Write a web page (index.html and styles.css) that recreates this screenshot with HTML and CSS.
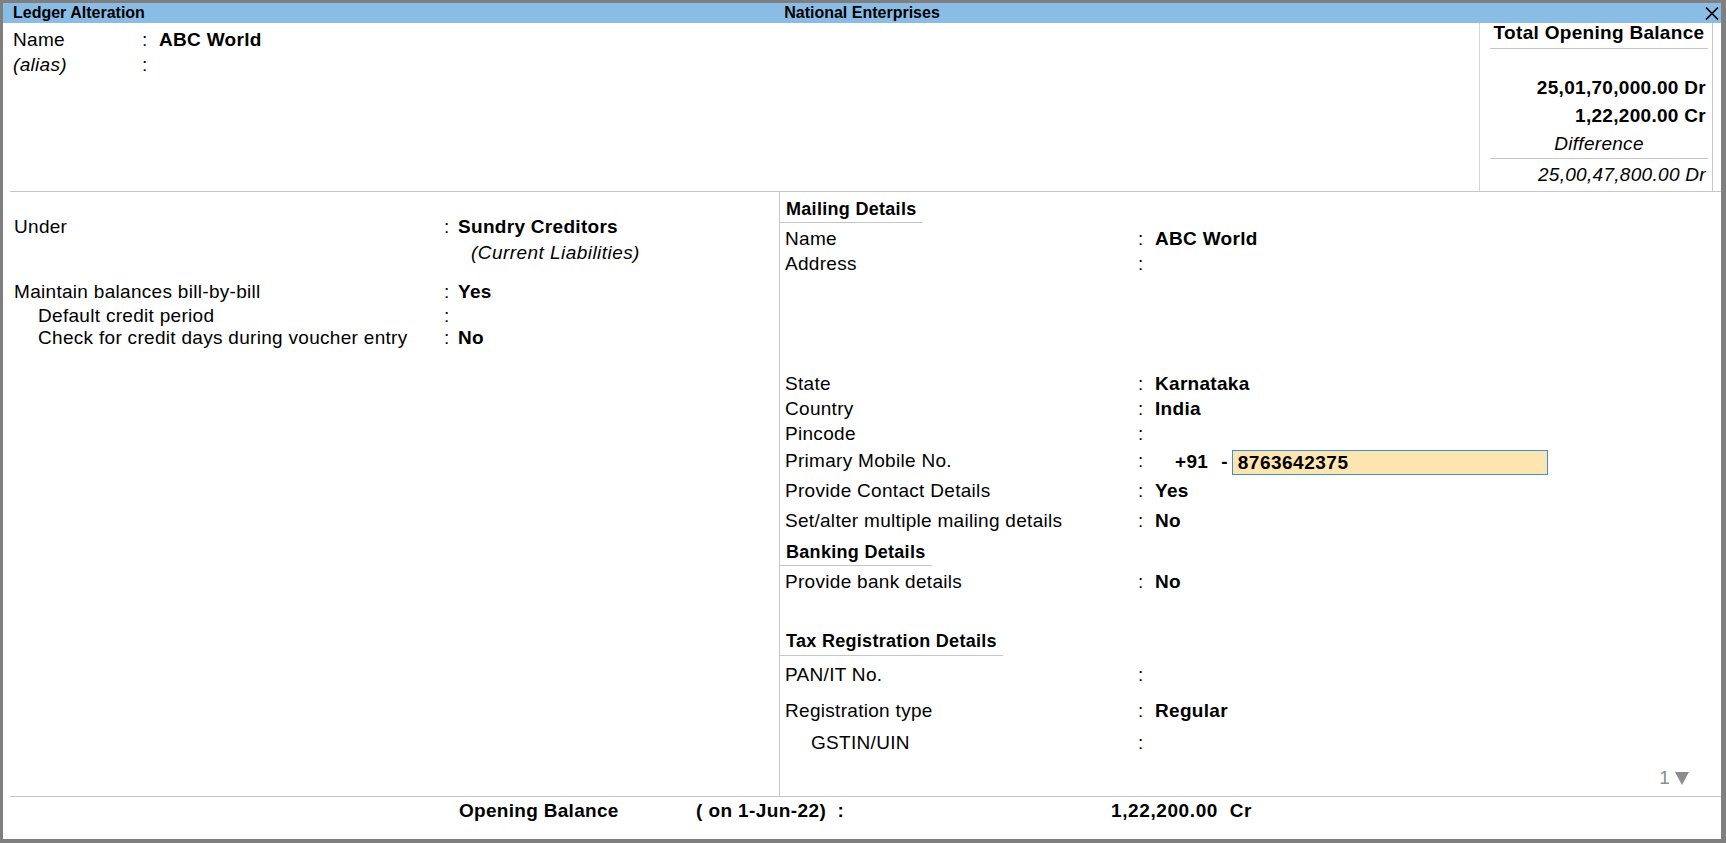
FILE: index.html
```html
<!DOCTYPE html>
<html>
<head>
<meta charset="utf-8">
<title>Ledger Alteration</title>
<link rel="stylesheet" href="styles.css">
</head>
<body>
<div class="window">
  <div class="titlebar">
    <div class="tb-left">Ledger Alteration</div>
    <div class="tb-center">National Enterprises</div>
    <div class="tb-right">
      <svg class="close-icon" width="14" height="13" viewBox="0 0 14 13"><path d="M1 0.5 L13 12.5 M13 0.5 L1 12.5" stroke="#000" stroke-width="1.7" fill="none"/></svg>
    </div>
  </div>

  <div class="top">
    <div class="name-block">
      <div class="nrow"><span class="nlabel">Name</span><span class="ncolon">:</span><span class="val">ABC World</span></div>
      <div class="nrow"><span class="nlabel italic">(alias)</span><span class="ncolon">:</span><span></span></div>
    </div>
    <div class="totals">
      <div class="tot-title">Total Opening Balance</div>
      <div class="tot-dr">25,01,70,000.00 Dr</div>
      <div class="tot-cr">1,22,200.00 Cr</div>
      <div class="tot-diff-label">Difference</div>
      <div class="tot-diff">25,00,47,800.00 Dr</div>
    </div>
  </div>

  <div class="sep"></div>

  <div class="main">
    <div class="left-col">
      <div class="lrow r-under"><span class="l-label">Under</span><span class="l-colon">:</span><span class="val">Sundry Creditors</span></div>
      <div class="lrow r-parent"><span class="parent italic">(Current Liabilities)</span></div>
      <div class="lrow r-maintain"><span class="l-label">Maintain balances bill-by-bill</span><span class="l-colon">:</span><span class="val">Yes</span></div>
      <div class="lrow r-default"><span class="l-label indent">Default credit period</span><span class="l-colon">:</span><span></span></div>
      <div class="lrow r-check"><span class="l-label indent">Check for credit days during voucher entry</span><span class="l-colon">:</span><span class="val">No</span></div>
    </div>

    <div class="right-col">
      <div class="hdr-wrap"><div class="hdr hdr-mail">Mailing Details</div></div>
      <div class="rrow h25 mt3"><span class="r-label">Name</span><span class="r-colon">:</span><span class="val">ABC World</span></div>
      <div class="rrow h25"><span class="r-label">Address</span><span class="r-colon">:</span><span></span></div>
      <div class="addr-space"></div>
      <div class="rrow h25"><span class="r-label">State</span><span class="r-colon">:</span><span class="val">Karnataka</span></div>
      <div class="rrow h25"><span class="r-label">Country</span><span class="r-colon">:</span><span class="val">India</span></div>
      <div class="rrow h25"><span class="r-label">Pincode</span><span class="r-colon">:</span><span></span></div>
      <div class="rrow h30"><span class="r-label">Primary Mobile No.</span><span class="r-colon">:</span>
        <span class="mobile"><span class="val cc">+91</span><span class="val dash">-</span><span class="mbox">8763642375</span></span>
      </div>
      <div class="rrow h29"><span class="r-label">Provide Contact Details</span><span class="r-colon">:</span><span class="val">Yes</span></div>
      <div class="rrow h32"><span class="r-label">Set/alter multiple mailing details</span><span class="r-colon">:</span><span class="val">No</span></div>
      <div class="hdr-wrap"><div class="hdr hdr-bank">Banking Details</div></div>
      <div class="rrow h25 mt3"><span class="r-label">Provide bank details</span><span class="r-colon">:</span><span class="val">No</span></div>
      <div class="hdr-wrap"><div class="hdr hdr-tax">Tax Registration Details</div></div>
      <div class="rrow h37"><span class="r-label">PAN/IT No.</span><span class="r-colon">:</span><span></span></div>
      <div class="rrow h36"><span class="r-label">Registration type</span><span class="r-colon">:</span><span class="val">Regular</span></div>
      <div class="rrow h28"><span class="r-label indent2">GSTIN/UIN</span><span class="r-colon">:</span><span></span></div>
      <div class="pager"><span>1</span><svg class="down" width="14" height="13" viewBox="0 0 14 13"><polygon points="0,0 14,0 7,13" fill="#8c8c8c"/></svg></div>
    </div>
  </div>

  <div class="sep"></div>

  <div class="footer">
    <span class="f-label">Opening Balance</span><span class="f-date">( on 1-Jun-22)  :</span><span class="f-amt">1,22,200.00  Cr</span>
  </div>
</div>
</body>
</html>
```

FILE: styles.css
```css
* { box-sizing: border-box; }
html, body { margin: 0; height: 100%; }
body {
  background: #7f7f7f;
  padding: 3px 5px 4px 3px;
  font-family: "Liberation Sans", Arial, sans-serif;
  font-size: 19px;
  letter-spacing: 0.3px;
  color: #000;
}
.window {
  background: #fff;
  height: 100%;
  display: flex;
  flex-direction: column;
}
.titlebar {
  height: 20px;
  flex: none;
  background: #8abde6;
  display: grid;
  grid-template-columns: 1fr auto 1fr;
  align-items: center;
  font-weight: bold;
  font-size: 16px;
  letter-spacing: 0;
  line-height: 20px;
}
.tb-left { padding-left: 10px; }
.tb-right { display: flex; justify-content: flex-end; padding-right: 2px; }
.close-icon { display: block; }

.top {
  height: 168px;
  flex: none;
  display: flex;
  justify-content: space-between;
}
.name-block { padding: 4px 0 0 10px; }
.nrow { display: flex; height: 25px; line-height: 25px; }
.nlabel { width: 129px; }
.ncolon { width: 17px; }
.val { font-weight: bold; }
.italic { font-style: italic; }

.totals {
  width: 234px;
  margin-right: 8px;
  border-left: 1px solid #d6d6d6;
  border-right: 1px solid #c6c6c6;
  padding: 0 6px 0 10px;
}
.tot-title {
  font-weight: bold;
  text-align: center;
  line-height: 20px;
  padding-bottom: 5px;
  border-bottom: 1px solid #c6c6c6;
  margin-right: -2px;
}
.tot-dr { margin-top: 25px; line-height: 27px; text-align: right; font-weight: bold; }
.tot-cr { line-height: 29px; text-align: right; font-weight: bold; }
.tot-diff-label { line-height: 28px; text-align: center; font-style: italic; border-bottom: 1px solid #c6c6c6; margin-right: -2px; }
.tot-diff { line-height: 31px; text-align: right; font-style: italic; }

.sep {
  height: 1px;
  flex: none;
  margin-left: 7px;
  background: #c6c6c6;
}

.main {
  height: 604px;
  flex: none;
  display: flex;
}
.left-col {
  width: 776px;
  flex: none;
  padding: 22px 0 0 11px;
}
.lrow { display: flex; align-items: center; }
.l-label { width: 430px; flex: none; }
.l-colon { width: 14px; flex: none; }
.indent { padding-left: 24px; }
.r-under { height: 26px; }
.r-parent { height: 25px; }
.parent { padding-left: 457px; letter-spacing: 0.45px; }
.r-maintain { height: 24px; margin-top: 15px; }
.r-default { height: 23px; }
.r-check { height: 22px; }

.right-col {
  flex: 1;
  border-left: 1px solid #c6c6c6;
  display: flex;
  flex-direction: column;
}
.hdr-wrap { display: flex; }
.hdr {
  font-weight: bold;
  font-size: 18px;
  line-height: 22px;
  padding: 6px 6px 2px 6px;
  border-bottom: 1px solid #c6c6c6;
}
.hdr-bank { padding-top: 4px; }
.hdr-tax { padding-top: 36px; padding-bottom: 3px; }
.rrow { display: flex; align-items: center; padding-left: 5px; }
.r-label { width: 353px; flex: none; }
.r-colon { width: 17px; flex: none; }
.indent2 { padding-left: 26px; }
.h25 { height: 25px; }
.h28 { height: 28px; }
.h29 { height: 29px; }
.h30 { height: 30px; }
.h32 { height: 32px; }
.h36 { height: 36px; }
.h37 { height: 37px; }
.mt3 { margin-top: 3px; }
.addr-space { height: 95px; flex: none; }

.mobile { display: flex; align-items: center; padding-top: 2px; }
.cc { margin-left: 20px; }
.dash { margin-left: 13px; }
.mbox {
  margin-left: 4px;
  width: 316px;
  height: 25px;
  line-height: 23px;
  background: #fde5b2;
  border: 1px solid #3f8fcf;
  padding-left: 5px;
  font-weight: bold;
  letter-spacing: 0.5px;
}

.pager {
  margin-top: 10px;
  line-height: 22px;
  display: flex;
  align-items: center;
  justify-content: flex-end;
  gap: 5px;
  padding-right: 32px;
  color: #8c8c8c;
}
.down { display: block; }

.footer {
  flex: 1;
  display: flex;
  padding: 3px 0 0 456px;
  line-height: 22px;
  font-weight: bold;
  white-space: pre;
}
.f-label { width: 237px; flex: none; }
.f-date { width: 415px; flex: none; letter-spacing: 0.4px; }
.f-amt { letter-spacing: 0.6px; }
```
